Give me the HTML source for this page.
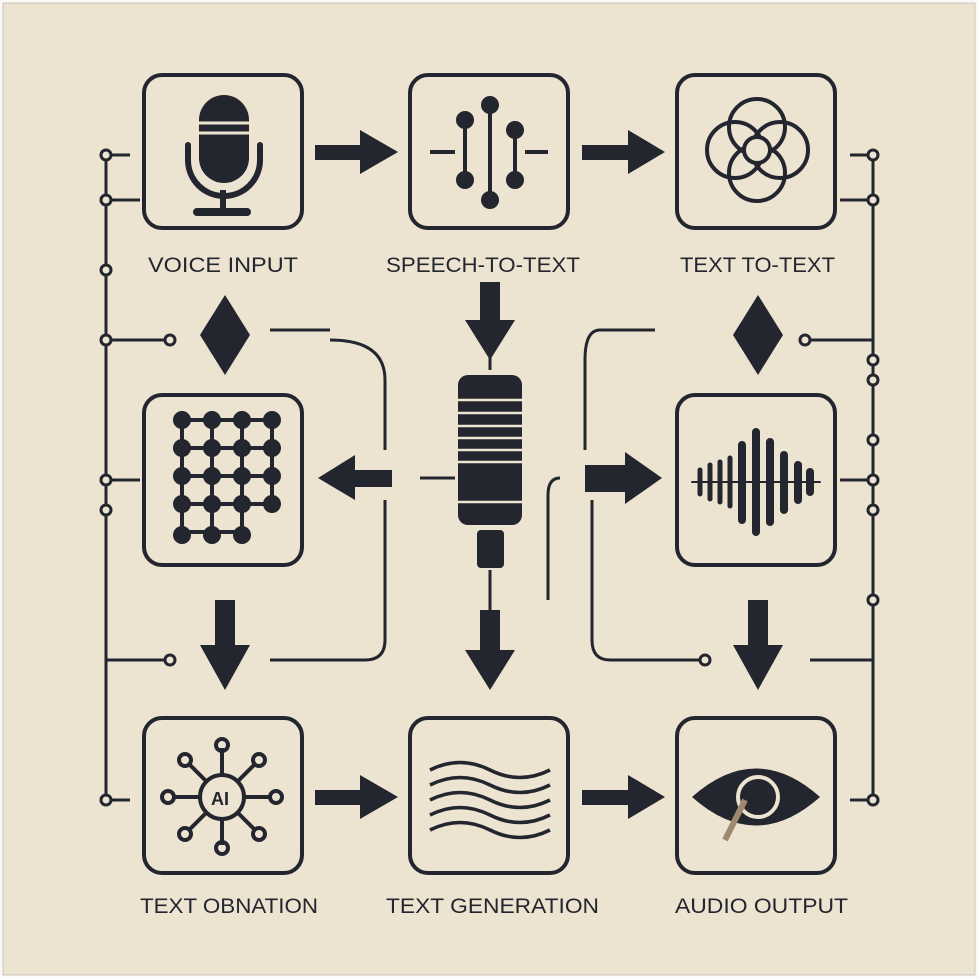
<!DOCTYPE html>
<html><head><meta charset="utf-8"><style>
html,body{margin:0;padding:0;background:#fff}
.w{width:979px;height:979px;position:relative;background:#fbfaf7}
svg{position:absolute;left:0;top:0}
text{font-family:"Liberation Sans",sans-serif;fill:#23262e;font-size:21px}
</style></head><body><div class="w">
<svg width="979" height="979" viewBox="0 0 979 979">
<rect x="3" y="3" width="972" height="972" fill="#ede3d1" stroke="#c9c4bb" stroke-width="1"/>
<g fill="none" stroke="#23262e" stroke-width="4">
<rect x="144" y="75" width="158" height="153" rx="18"/>
<rect x="410" y="75" width="158" height="153" rx="18"/>
<rect x="677" y="75" width="158" height="153" rx="18"/>
<rect x="144" y="395" width="158" height="170" rx="18"/>
<rect x="677" y="395" width="158" height="170" rx="18"/>
<rect x="144" y="718" width="158" height="155" rx="18"/>
<rect x="410" y="718" width="158" height="155" rx="18"/>
<rect x="677" y="718" width="158" height="155" rx="18"/>
</g>
<g fill="none" stroke="#23262e" stroke-width="3">
<path d="M106 155V800M106 155H130M106 200H140M106 270H112M106 340H170M106 480H140M106 660H170M106 800H130"/>
<path d="M873 155V800M873 155H850M873 200H840M873 340H805M873 480H840M873 660H810M873 800H850"/>
<path d="M270 330H330M330 340Q385 340 385 380V450M385 480H330"/>
<path d="M600 330Q585 330 585 360V450M655 330H600M560 478Q548 478 548 495V600"/>
<path d="M385 500V640Q385 660 365 660H270M592 500V640Q592 660 610 660H700"/>
<path d="M420 478H455M490 282V370M490 570V610"/>
</g>
<g fill="#ede3d1" stroke="#23262e" stroke-width="3">
<circle cx="106" cy="155" r="5"/><circle cx="106" cy="200" r="5"/><circle cx="106" cy="270" r="5"/>
<circle cx="106" cy="340" r="5"/><circle cx="106" cy="480" r="5"/><circle cx="106" cy="510" r="5"/><circle cx="106" cy="800" r="5"/>
<circle cx="873" cy="155" r="5"/><circle cx="873" cy="200" r="5"/><circle cx="873" cy="360" r="5"/><circle cx="873" cy="380" r="5"/>
<circle cx="873" cy="440" r="5"/><circle cx="873" cy="480" r="5"/><circle cx="873" cy="510" r="5"/><circle cx="873" cy="600" r="5"/><circle cx="873" cy="800" r="5"/>
<circle cx="805" cy="340" r="5"/><circle cx="170" cy="340" r="5"/><circle cx="705" cy="660" r="5"/><circle cx="170" cy="660" r="5"/>
</g>
<g fill="#23262e">
<path d="M315 145H360V130L398 152L360 174V160H315Z"/>
<path d="M582 145H628V130L665 152L628 174V160H582Z"/>
<path d="M315 790H360V775L398 797L360 819V805H315Z"/>
<path d="M582 790H628V775L665 797L628 819V805H582Z"/>
<path d="M392 470H355V455L318 478L355 500V487H392Z"/>
<path d="M585 465H625V452L662 478L625 504V492H585Z"/>
<path d="M480 282H500V320H515L490 360L465 320H480Z"/>
<path d="M480 610H500V650H515L490 690L465 650H480Z"/>
<path d="M215 600H235V645H250L225 690L200 645H215Z"/>
<path d="M748 600H768V645H783L758 690L733 645H748Z"/>
<path d="M225 295L250 335L225 375L200 335Z"/>
<path d="M758 295L783 335L758 375L733 335Z"/>
<rect x="458" y="375" width="64" height="150" rx="10"/>
<rect x="477" y="530" width="27" height="38" rx="4"/>
</g>
<g stroke="#ede3d1" stroke-width="2.5">
<path d="M458 400H522M458 413H522M458 426H522M458 438H522M458 450H522M458 462H522M458 502H522"/>
</g>
<g fill="#23262e"><rect x="199" y="95" width="50" height="88" rx="25"/><rect x="193" y="208" width="58" height="8" rx="4"/><rect x="220" y="190" width="6" height="20"/></g>
<path d="M188 145V160A36 36 0 0 0 260 160V145" fill="none" stroke="#23262e" stroke-width="6" stroke-linecap="round"/>
<path d="M199 123H249M199 133H249" stroke="#ede3d1" stroke-width="3"/>
<g stroke="#23262e" stroke-width="4" fill="#23262e">
<path d="M465 120V180M490 105V200M515 130V180M430 152H455M525 152H548" fill="none"/>
<circle cx="465" cy="120" r="7"/><circle cx="465" cy="180" r="7"/><circle cx="490" cy="105" r="7"/><circle cx="490" cy="200" r="7"/><circle cx="515" cy="130" r="7"/><circle cx="515" cy="180" r="7"/>
</g>
<g fill="none" stroke="#23262e" stroke-width="4">
<circle cx="735" cy="150" r="28"/><circle cx="780" cy="150" r="28"/><circle cx="757" cy="127" r="28"/><circle cx="757" cy="173" r="28"/>
</g>
<circle cx="757" cy="150" r="13" fill="#ede3d1" stroke="#23262e" stroke-width="4"/>
<g stroke="#23262e" stroke-width="4" fill="#23262e">
<path d="M182 420V535M212 420V535M242 420V535M272 420V500M182 420H272M182 448H272M182 476H272M182 504H272M182 532H242" fill="none"/>
<circle cx="182" cy="420" r="7"/><circle cx="212" cy="420" r="7"/><circle cx="242" cy="420" r="7"/><circle cx="272" cy="420" r="7"/>
<circle cx="182" cy="448" r="7"/><circle cx="212" cy="448" r="7"/><circle cx="242" cy="448" r="7"/><circle cx="272" cy="448" r="7"/>
<circle cx="182" cy="476" r="7"/><circle cx="212" cy="476" r="7"/><circle cx="242" cy="476" r="7"/><circle cx="272" cy="476" r="7"/>
<circle cx="182" cy="504" r="7"/><circle cx="212" cy="504" r="7"/><circle cx="242" cy="504" r="7"/><circle cx="272" cy="504" r="7"/>
<circle cx="182" cy="535" r="7"/><circle cx="212" cy="535" r="7"/><circle cx="242" cy="535" r="7"/>
</g>
<g stroke="#23262e" stroke-linecap="round">
<path d="M692 482H820" stroke-width="2"/>
<path d="M700 470V494M710 465V499M720 462V502M730 458V506" stroke-width="5"/>
<path d="M742 445V520M756 432V532M770 442V522M784 455V510M798 465V500M810 472V492" stroke-width="8"/>
</g>
<g stroke="#23262e" stroke-width="4" fill="none">
<circle cx="222" cy="797" r="22"/>
<path d="M222 775V748M222 819V845M200 797H172M244 797H272M206 781L188 763M238 781L256 763M206 813L188 831M238 813L256 831"/>
<circle cx="222" cy="745" r="6"/><circle cx="222" cy="848" r="6"/><circle cx="168" cy="797" r="6"/><circle cx="276" cy="797" r="6"/>
<circle cx="185" cy="760" r="6"/><circle cx="259" cy="760" r="6"/><circle cx="185" cy="834" r="6"/><circle cx="259" cy="834" r="6"/>
</g>
<text x="211" y="805" style="font-size:18px;font-weight:bold">AI</text>
<g stroke="#23262e" stroke-width="3.5" fill="none">
<path d="M430 770Q460 755 490 770T550 770"/>
<path d="M430 785Q460 770 490 785T550 785"/>
<path d="M430 800Q460 785 490 800T550 800"/>
<path d="M430 815Q460 800 490 815T550 815"/>
<path d="M430 830Q460 815 490 830T550 830"/>
</g>
<path d="M692 797Q756 740 820 797Q756 854 692 797Z" fill="#23262e"/>
<circle cx="758" cy="797" r="20" fill="none" stroke="#ede3d1" stroke-width="4"/>
<path d="M745 800L725 840" stroke="#a08870" stroke-width="6"/>
<text x="148" y="272" textLength="150" lengthAdjust="spacingAndGlyphs">VOICE INPUT</text>
<text x="386" y="272" textLength="194" lengthAdjust="spacingAndGlyphs">SPEECH-TO-TEXT</text>
<text x="680" y="272" textLength="155" lengthAdjust="spacingAndGlyphs">TEXT TO-TEXT</text>
<text x="140" y="913" textLength="178" lengthAdjust="spacingAndGlyphs">TEXT OBNATION</text>
<text x="386" y="913" textLength="213" lengthAdjust="spacingAndGlyphs">TEXT GENERATION</text>
<text x="675" y="913" textLength="173" lengthAdjust="spacingAndGlyphs">AUDIO OUTPUT</text>
</svg></div></body></html>
